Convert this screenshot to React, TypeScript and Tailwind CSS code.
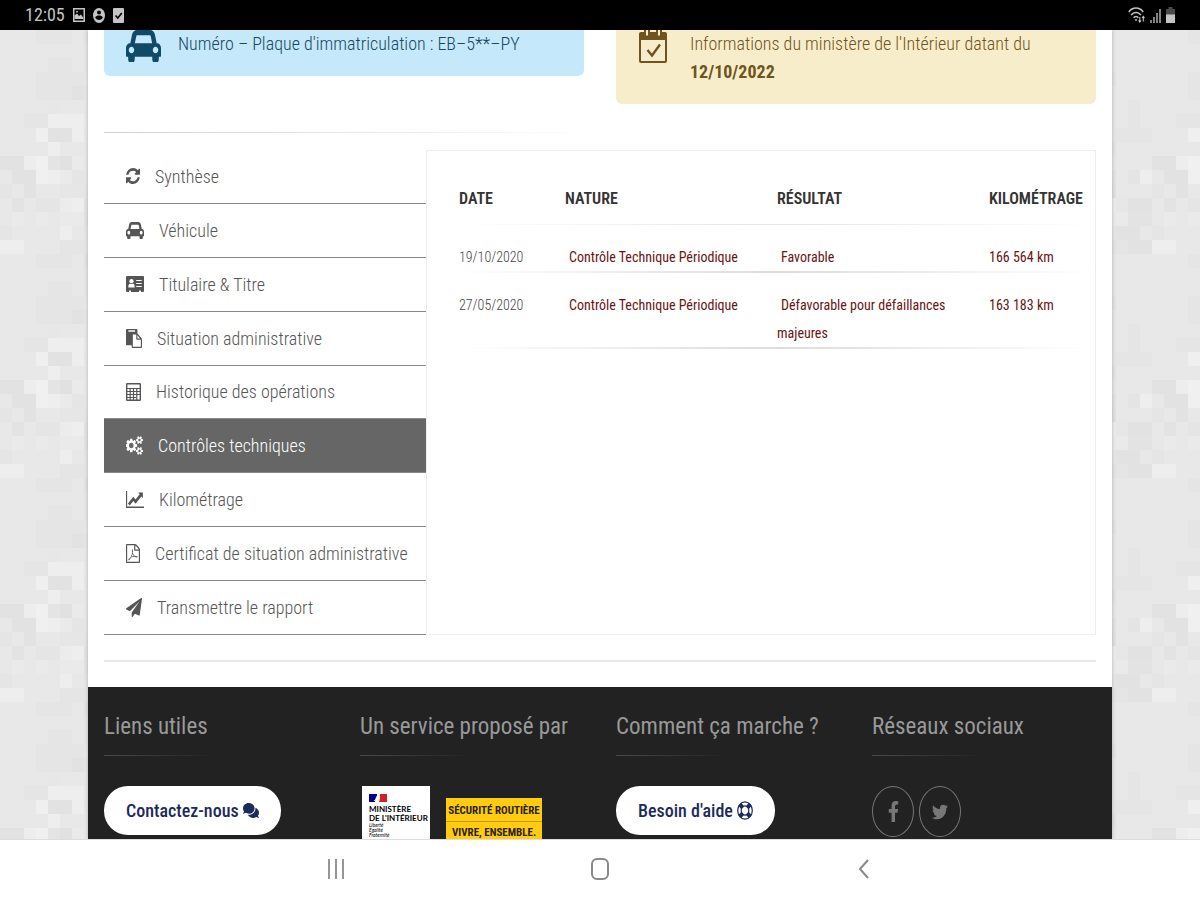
import type { ReactNode } from "react";
import { FaComments, FaFacebookF, FaTwitter } from "react-icons/fa";

const CAR_PATH =
  "M480 1088q0-66-47-113t-113-47-113 47-47 113 47 113 113 47 113-47 47-113zm36-320h1016l-89-357q-2-8-14-17.5t-21-9.5h-768q-9 0-21 9.5t-14 17.5zm1372 320q0-66-47-113t-113-47-113 47-47 113 47 113 113 47 113-47 47-113zm160-96v384q0 14-9 23t-23 9h-96v128q0 80-56 136t-136 56-136-56-56-136v-128h-1024v128q0 80-56 136t-136 56-136-56-56-136v-128h-96q-14 0-23-9t-9-23v-384q0-93 65.5-158.5t158.5-65.5h28l105-419q23-94 104-157.5t179-63.5h768q98 0 179 63.5t104 157.5l105 419h28q93 0 158.5 65.5t65.5 158.5z";
const REFRESH_PATH =
  "M1639 1056q0 5-1 7-64 268-268 434.5t-478 166.5q-146 0-282.5-55t-243.5-157l-129 129q-19 19-45 19t-45-19-19-45v-448q0-26 19-45t45-19h448q26 0 45 19t19 45-19 45l-137 137q71 66 161 102t187 36q134 0 250-65t186-179q11-17 53-117 8-23 30-23h192q13 0 22.5 9.5t9.5 22.5zm25-800v448q0 26-19 45t-45 19h-448q-26 0-45-19t-19-45 19-45l138-138q-148-137-349-137-134 0-250 65t-186 179q-11 17-53 117-8 23-30 23h-199q-13 0-22.5-9.5t-9.5-22.5v-7q65-268 270-434.5t480-166.5q146 0 284 55.5t245 156.5l130-129q19-19 45-19t45 19 19 45z";
const PASTE_PATH =
  "M768 1664h896v-640h-416q-40 0-68-28t-28-68v-416h-384v1152zm256-1440v-64q0-13-9.5-22.5t-22.5-9.5h-704q-13 0-22.5 9.5t-9.5 22.5v64q0 13 9.5 22.5t22.5 9.5h704q13 0 22.5-9.5t9.5-22.5zm256 672h299l-299-299v299zm512 128v672q0 40-28 68t-68 28h-960q-40 0-68-28t-28-68v-160h-544q-40 0-68-28t-28-68v-1344q0-40 28-68t68-28h1088q40 0 68 28t28 68v328q21 13 36 28l408 408q28 28 48 76t20 88z";
const CHART_PATH =
  "M2048 1536v128h-2048v-1536h128v1408h1920zm-128-1248v435q0 21-19.5 29.5t-35.5-7.5l-121-121-633 633q-10 10-23 10t-23-10l-233-233-416 416-192-192 585-585q10-10 23-10t23 10l233 233 464-464-121-121q-16-16-7.5-35.5t29.5-19.5h435q14 0 23 9t9 23z";
const COGS_PATH =
  "M832 896q0-106-75-181t-181-75-181 75-75 181 75 181 181 75 181-75 75-181zm768 512q0-52-38-90t-90-38-90 38-38 90q0 53 37.5 90.5t90.5 37.5 90.5-37.5 37.5-90.5zm0-1024q0-52-38-90t-90-38-90 38-38 90q0 53 37.5 90.5t90.5 37.5 90.5-37.5 37.5-90.5zm-384 421v185q0 10-7 19.5t-16 10.5l-155 24q-11 35-32 76 34 48 90 115 7 11 7 20 0 12-7 19-23 30-82.5 89.5t-78.5 59.5q-11 0-21-7l-115-90q-37 19-77 31-11 108-23 155-7 24-30 24h-186q-11 0-20-7.5t-10-17.5l-23-153q-34-10-75-31l-118 89q-7 7-20 7-11 0-21-8-144-133-144-160 0-9 7-19 10-14 41-53t47-61q-23-44-35-82l-152-24q-10-1-17-9.5t-7-19.5v-185q0-10 7-19.5t16-10.5l155-24q11-35 32-76-34-48-90-115-7-11-7-20 0-12 7-20 22-30 82-89t79-59q11 0 21 7l115 90q34-18 77-32 11-108 23-154 7-24 30-24h186q11 0 20 7.5t10 17.5l23 153q34 10 75 31l118-89q8-7 20-7 11 0 21 8 144 133 144 160 0 8-7 19-12 16-42 54t-45 60q23 48 34 82l152 23q10 2 17 10.5t7 19.5zm640 533v140q0 16-149 31-12 27-30 52 51 113 51 138 0 4-4 7-122 71-124 71-8 0-46-47t-52-68q-20 2-30 2t-30-2q-14 21-52 68t-46 47q-2 0-124-71-4-3-4-7 0-25 51-138-18-25-30-52-149-15-149-31v-140q0-16 149-31 13-29 30-52-51-113-51-138 0-4 4-7 4-2 35-20t59-34 30-16q8 0 46 46.5t52 67.5q20-2 30-2t30 2q51-71 92-112l6-2q4 0 124 70 4 3 4 7 0 25-51 138 17 23 30 52 149 15 149 31zm0-1024v140q0 16-149 31-12 27-30 52 51 113 51 138 0 4-4 7-122 71-124 71-8 0-46-47t-52-68q-20 2-30 2t-30-2q-14 21-52 68t-46 47q-2 0-124-71-4-3-4-7 0-25 51-138-18-25-30-52-149-15-149-31v-140q0-16 149-31 13-29 30-52-51-113-51-138 0-4 4-7 4-2 35-20t59-34 30-16q8 0 46 46.5t52 67.5q20-2 30-2t30 2q51-71 92-112l6-2q4 0 124 70 4 3 4 7 0 25-51 138 17 23 30 52 149 15 149 31z";
const PDF_PATH =
  "M1596 380q28 28 48 76t20 88v1152q0 40-28 68t-68 28h-1344q-40 0-68-28t-28-68v-1600q0-40 28-68t68-28h896q40 0 88 20t76 48zm-444-244v376h376q-10-29-22-41l-313-313q-12-12-41-22zm384 1528v-1024h-416q-40 0-68-28t-28-68v-416h-768v1536h1280zm-514-593q33 26 84 56 59-7 117-7 147 0 177 49 16 22 2 52 0 1-1 2l-2 2v1q-6 38-71 38-48 0-115-20t-130-53q-221 24-392 83-153 262-242 262-15 0-28-7l-24-12q-1-1-6-5-10-10-6-36 9-40 56-91.5t132-96.5q14-9 23 6 2 2 2 4 52-85 107-197 68-136 104-262-24-82-30.5-159.5t6.5-127.5q11-40 42-40h22q23 0 35 15 18 21 9 68-2 6-4 8 1 3 1 8v30q-2 123-14 192 55 164 146 238zm-576 411q52-24 137-158-51 40-87.5 84t-49.5 74zm398-920q-15 42-2 132 1-7 7-44 0-3 7-43 1-4 4-8-1-1-1-2-1-2-1-3-1-22-13-36 0 1-1 2v2zm-124 661q135-54 284-81-2-1-13-9.5t-16-13.5q-76-67-127-176-27 86-83 197-30 56-45 83zm646-16q-24-24-140-24 76 28 124 28 14 0 18-1 0-1-2-3z";
const PLANE_PATH =
  "M1764 11q33 24 27 64l-256 1536q-5 29-32 45-14 8-31 8-11 0-24-5l-453-185-242 295q-18 23-49 23-13 0-22-4-19-7-30.5-23.5t-11.5-36.5v-349l864-1059-1069 925-395-162q-37-14-40-55-2-40 32-59l1664-960q15-9 32-9 20 0 36 11z";

function Glyph({ d, viewBox, className }: { d: string; viewBox: string; className: string }) {
  return (
    <svg viewBox={viewBox} preserveAspectRatio="none" fill="currentColor" className={className} aria-hidden="true">
      <path d={d} />
    </svg>
  );
}

function IdCardIcon() {
  return (
    <svg viewBox="0 0 18 16" preserveAspectRatio="none" className="h-4 w-[18px]" aria-hidden="true">
      <path d="M1 0h16a1 1 0 0 1 1 1v14a1 1 0 0 1-1 1h-2v-1.500h-2V16H5v-1.500H3V16H1a1 1 0 0 1-1-1V1a1 1 0 0 1 1-1z" fill="currentColor" />
      <circle cx="5.500" cy="5.200" r="2.100" fill="#fff" />
      <path d="M2.300 11.500c0-3 1-4 1.800-4 .9.700 1.900.7 2.800 0 .8 0 1.800 1 1.800 4z" fill="#fff" />
      <path d="M10.200 4.500h5.500M10.200 7.500h5.500M10.200 10.500h5.500" stroke="#fff" strokeWidth="1.200" />
    </svg>
  );
}

function CalculatorIcon() {
  return (
    <svg viewBox="0 0 15 18" fill="none" stroke="currentColor" className="h-[18px] w-[15px]" aria-hidden="true">
      <rect x="0.700" y="0.700" width="13.600" height="16.600" rx="0.500" strokeWidth="1.400" />
      <path d="M1 5.500h13M1 8.500h13M1 11.500h13M1 14.500h9M4.200 5.500V17M7.500 5.500V17M10.800 5.500V17" strokeWidth="1.200" />
    </svg>
  );
}

function CalendarIcon() {
  return (
    <svg viewBox="0 0 28 38" fill="none" className="-mt-1 -mb-3 h-[38px] w-7 shrink-0 text-[#6f5420]" aria-hidden="true">
      <path d="M2 6h24a2 2 0 0 1 2 2v27a2 2 0 0 1-2 2H2a2 2 0 0 1-2-2V8a2 2 0 0 1 2-2zM2 14v21h24V14z" fill="currentColor" fillRule="evenodd" />
      <rect x="5" y="1" width="6" height="10" rx="2" fill="currentColor" />
      <rect x="17" y="1" width="6" height="10" rx="2" fill="currentColor" />
      <path d="M8 2.500v7M20 2.500v7" stroke="#f8edcb" strokeWidth="2" />
      <path d="m8.500 24 4.500 5.500 8-11" stroke="currentColor" strokeWidth="2.400" />
    </svg>
  );
}

function LifeRingIcon() {
  return (
    <svg viewBox="0 0 16 19" preserveAspectRatio="none" fill="none" stroke="currentColor" className="h-[19px] w-4" aria-hidden="true">
      <ellipse cx="8" cy="9.500" rx="7.300" ry="8.700" strokeWidth="1.200" />
      <ellipse cx="8" cy="9.500" rx="3.800" ry="4.600" strokeWidth="1.200" />
      <path d="m2.800 3.400 3 3.500M13.200 3.400l-3 3.500M2.800 15.600l3-3.500M13.200 15.600l-3-3.500" strokeWidth="4" />
    </svg>
  );
}

type Tab = { label: string; icon: ReactNode; active?: boolean };

const tabs: Tab[] = [
  { label: "Synthèse", icon: <Glyph d={REFRESH_PATH} viewBox="128 128 1536 1536" className="h-4 w-3.5" /> },
  { label: "Véhicule", icon: <Glyph d={CAR_PATH} viewBox="0 128 2048 1536" className="h-[17px] w-[18px]" /> },
  { label: "Titulaire & Titre", icon: <IdCardIcon /> },
  { label: "Situation administrative", icon: <Glyph d={PASTE_PATH} viewBox="0 0 1792 1792" className="h-[19px] w-4" /> },
  { label: "Historique des opérations", icon: <CalculatorIcon /> },
  { label: "Contrôles techniques", icon: <Glyph d={COGS_PATH} viewBox="0 0 1856 1792" className="h-[19px] w-[17px]" />, active: true },
  { label: "Kilométrage", icon: <Glyph d={CHART_PATH} viewBox="0 128 2048 1536" className="h-[17px] w-[18px]" /> },
  { label: "Certificat de situation administrative", icon: <Glyph d={PDF_PATH} viewBox="128 0 1536 1792" className="h-[19px] w-3.5" /> },
  { label: "Transmettre le rapport", icon: <Glyph d={PLANE_PATH} viewBox="0 0 1792 1792" className="h-[19px] w-4" /> },
];

const controls = [
  { date: "19/10/2020", nature: "Contrôle Technique Périodique", result: "Favorable", km: "166 564 km" },
  { date: "27/05/2020", nature: "Contrôle Technique Périodique", result: "Défavorable pour défaillances majeures", km: "163 183 km" },
];

function noise(seed: number) {
  const n = Math.sin(seed * 12.9898) * 43758.5453;
  return n - Math.floor(n);
}

// Small deterministic mosaic used as the page texture
const tileCells = Array.from({ length: 110 }, (_, i) => {
  const r = noise(i + 1);
  return {
    x: Math.floor(noise(i + 200) * 15) * 12,
    y: Math.floor(noise(i + 400) * 16) * 14,
    width: noise(i + 600) > 0.6 ? 24 : 12,
    height: noise(i + 800) > 0.8 ? 28 : 14,
    fill: r > 0.8 ? "#f1f1f1" : r > 0.5 ? "#ececec" : r < 0.15 ? "#e0e0e0" : "#e5e5e5",
  };
});

function Texture() {
  return (
    <svg className="absolute inset-0 h-full w-full" aria-hidden="true">
      <defs>
        <pattern id="mosaic" width="192" height="224" patternUnits="userSpaceOnUse">
          {tileCells.map((c, i) => (
            <rect key={i} {...c} fillOpacity="0.7" />
          ))}
        </pattern>
      </defs>
      <rect width="100%" height="100%" fill="url(#mosaic)" />
    </svg>
  );
}

function StatusBar() {
  return (
    <header className="flex h-[30px] shrink-0 items-center justify-between bg-black px-[25px] text-[#c4c4c4]">
      <div className="flex items-center gap-2">
        <span className="text-[18px] leading-[30px]">12:05</span>
        <svg viewBox="0 0 12 14" className="h-3.5 w-3" aria-hidden="true">
          <path d="M0 0h12v14H0zM1.500 1.500v11h9v-11z" fill="currentColor" fillRule="evenodd" />
          <path d="M1.500 11V7.500l2.500-2 2 2.500 2-1.500 2.500 3.500v1z" fill="currentColor" />
          <circle cx="4" cy="3.700" r="0.900" fill="currentColor" />
        </svg>
        <svg viewBox="0 0 12 15" className="h-[15px] w-3" aria-hidden="true">
          <ellipse cx="6" cy="7.500" rx="6" ry="7.500" fill="currentColor" />
          <circle cx="6" cy="4.500" r="2" fill="#000" />
          <path d="M2.200 9.300c1.200-2.400 6.400-2.400 7.600 0-.8 3.500-6.800 3.500-7.600 0z" fill="#000" />
        </svg>
        <svg viewBox="0 0 11 15" className="h-[15px] w-[11px]" aria-hidden="true">
          <rect width="11" height="15" rx="1" fill="currentColor" />
          <path d="m2.500 7.500 2.300 2.500 4-5" stroke="#000" strokeWidth="1.600" fill="none" />
        </svg>
      </div>
      <div className="flex items-center gap-[5px]">
        <svg viewBox="0 0 17 16" fill="none" stroke="currentColor" className="h-4 w-[17px]" aria-hidden="true">
          <path d="M.8 5C4.500-.2 11.500-.2 15.200 5M3.200 8c2.500-3.400 7.100-3.400 9.600 0M5.600 10.800c1.200-1.700 3.600-1.700 4.800 0" strokeWidth="1.500" />
          <path d="M7 12.500 8 14l1-1.500z" fill="currentColor" strokeWidth="0.500" />
          <path d="M11.800 10v5M10.600 13.500l1.200 1.500 1.200-1.500M15.300 14.500V9.500M14.100 11l1.200-1.500 1.200 1.500" strokeWidth="1.100" />
        </svg>
        <svg viewBox="0 0 11 15" stroke="currentColor" className="h-[15px] w-[11px]" aria-hidden="true">
          <path d="M1 15v-3M4 15V9M7 15V5M10 15V1" strokeWidth="1.300" />
        </svg>
        <svg viewBox="0 0 9 16" className="h-4 w-[9px]" aria-hidden="true">
          <path d="M2.500 0h4v2H9v14H0V2h2.500z" fill="#4a4a4a" />
          <path d="M0 7.500h9V16H0z" fill="currentColor" />
        </svg>
      </div>
    </header>
  );
}

function FooterColumn({ title, children }: { title: string; children: ReactNode }) {
  return (
    <section className="min-w-0">
      <h2 className="text-[23px] leading-7 whitespace-nowrap text-[#999]">{title}</h2>
      <div className="mt-3.5 mb-[30px] h-px bg-linear-to-r from-[#4a4a4a] to-transparent to-50%" />
      {children}
    </section>
  );
}

export default function App() {
  return (
    <div className="flex h-screen flex-col overflow-hidden bg-[#e8e8e8] font-['Roboto_Condensed',Roboto,sans-serif] text-[#555]">
      <StatusBar />

      <main className="relative flex-1 overflow-hidden">
        <Texture />
        <div className="relative mx-auto flex h-full max-w-[1024px] flex-col bg-white shadow-[0_0_4px_rgba(0,0,0,0.25)]">
          <div className="px-4">
            {/* Summary cards */}
            <div className="grid grid-cols-2 items-start gap-8 text-[18px] leading-7">
              <div className="-mt-2 flex items-start gap-[17px] rounded-md bg-[#c5e8fa] pt-2 pb-[18px] pl-[22px] font-light text-[#17485f]">
                <Glyph d={CAR_PATH} viewBox="0 128 2048 1536" className="-mb-1 h-8 w-[35px] shrink-0 text-[#0f4a66]" />
                <p>Numéro – Plaque d'immatriculation : EB–5**–PY</p>
              </div>
              <div className="-mt-2 flex items-start gap-[23px] rounded-md bg-[#f8edcb] pt-2 pb-[18px] pl-[23px] font-light text-[#6f5420]">
                <CalendarIcon />
                <p>
                  Informations du ministère de l'Intérieur datant du
                  <br />
                  <strong className="font-bold">12/10/2022</strong>
                </p>
              </div>
            </div>

            <div className="mt-7 mb-[17px] h-px bg-linear-to-r from-[#d0d0d0] to-transparent to-50%" />

            <div className="flex">
              {/* Report sections */}
              <nav className="grid min-h-[485px] w-[322px] shrink-0 auto-rows-fr">
                {tabs.map((tab) => (
                  <a
                    key={tab.label}
                    href="#"
                    className={`flex items-center gap-[15px] border-b border-[#888] pl-[22px] text-[18px] font-light whitespace-nowrap ${
                      tab.active ? "bg-[#666] text-white" : "text-[#555]"
                    }`}
                  >
                    {tab.icon}
                    <span>{tab.label}</span>
                  </a>
                ))}
              </nav>

              <div className="min-w-0 flex-1 border border-[#eee] pl-8">
                <table className="w-full table-fixed text-left align-top text-[14px] leading-7">
                  <thead>
                    <tr className="bg-[linear-gradient(90deg,transparent,#e4e4e4_50%,transparent)] bg-[length:100%_1px] bg-bottom bg-no-repeat text-[16px] text-[#333]">
                      <th className="w-1/6 pt-[34px] pb-3 font-semibold">DATE</th>
                      <th className="w-1/3 pt-[34px] pb-3 font-semibold">NATURE</th>
                      <th className="w-1/3 pt-[34px] pb-3 font-semibold">RÉSULTAT</th>
                      <th className="w-1/6 pt-[34px] pb-3 font-semibold">KILOMÉTRAGE</th>
                    </tr>
                  </thead>
                  <tbody>
                    {controls.map((row) => (
                      <tr
                        key={row.date}
                        className="bg-[linear-gradient(90deg,transparent,#dcdcdc_50%,transparent)] bg-[length:100%_2px] bg-bottom bg-no-repeat align-top text-[#691414]"
                      >
                        <td className="pt-[18px] pb-0.5 font-light text-[#444]">{row.date}</td>
                        <td className="pt-[18px] pb-0.5 indent-1">{row.nature}</td>
                        <td className="pt-[18px] pr-4 pb-0.5 indent-1">{row.result}</td>
                        <td className="pt-[18px] pb-0.5">{row.km}</td>
                      </tr>
                    ))}
                  </tbody>
                </table>
              </div>
            </div>

            <div className="my-[25px] h-0.5 bg-[#e8e8e8]" />
          </div>

          <footer className="grid flex-1 grid-cols-4 gap-8 bg-[#222] px-4 pt-[26px]">
            <FooterColumn title="Liens utiles">
              <button className="flex h-[49px] items-center gap-1 rounded-3xl bg-white px-[22px] text-[18px] font-medium text-[#1c2b5a]">
                Contactez-nous
                <FaComments preserveAspectRatio="none" className="h-[17px] w-4" />
              </button>
            </FooterColumn>
            <FooterColumn title="Un service proposé par">
              <div className="flex items-start gap-4 pl-0.5">
                <div className="w-[68px] bg-white pt-2 pb-4 pl-[7px] font-['Lato',sans-serif] text-black">
                  <svg viewBox="0 0 18 8" className="h-2 w-[18px]" aria-hidden="true">
                    <path d="M0 0h8v8H0z" fill="#000091" />
                    <path d="M11 0h7v8h-8z" fill="#d0202e" />
                    <path d="M6 8c0-3 1-6 3-7 1.500 0 2 1.500 2 3l-1 4z" fill="#fff" />
                    <path d="m5 7 2-2" stroke="#fff" strokeWidth="0.800" />
                  </svg>
                  <p className="mt-[3px] text-[8px] leading-[9px] font-bold whitespace-nowrap">
                    MINISTÈRE
                    <br />
                    DE L'INTÉRIEUR
                  </p>
                  <p className="text-[5px] leading-[5px] italic">
                    Liberté
                    <br />
                    Égalité
                    <br />
                    Fraternité
                  </p>
                </div>
                <div className="mt-3 w-24 bg-[#fc1] pt-0.5 text-center text-[11px] leading-[21px] font-bold whitespace-nowrap text-[#2c2208]">
                  <p className="border-b border-[#c99a10]">SÉCURITÉ ROUTIÈRE</p>
                  <p>VIVRE, ENSEMBLE.</p>
                </div>
              </div>
            </FooterColumn>
            <FooterColumn title="Comment ça marche ?">
              <button className="flex h-[49px] items-center gap-1 rounded-3xl bg-white px-[22px] text-[18px] font-medium text-[#1c2b5a]">
                Besoin d'aide
                <LifeRingIcon />
              </button>
            </FooterColumn>
            <FooterColumn title="Réseaux sociaux">
              <div className="flex gap-[5px] text-[#777]">
                <a href="#" aria-label="Facebook" className="flex h-[51px] w-[42px] items-center justify-center rounded-[50%] border border-[#777]">
                  <FaFacebookF preserveAspectRatio="none" className="h-[21px] w-[11px]" />
                </a>
                <a href="#" aria-label="Twitter" className="flex h-[51px] w-[42px] items-center justify-center rounded-[50%] border border-[#777]">
                  <FaTwitter preserveAspectRatio="none" className="h-[18px] w-4" />
                </a>
              </div>
            </FooterColumn>
          </footer>
        </div>
      </main>

      <nav className="h-[61px] shrink-0 border-t border-[#ddd] bg-white pb-0.5 text-[#8a8a8a]">
        <div className="mx-auto grid h-full w-[66%] grid-cols-3 place-items-center">
          <button aria-label="Recents">
            <svg viewBox="0 0 16 20" stroke="currentColor" className="h-5 w-4" aria-hidden="true">
              <path d="M1 0v20M8 0v20M15 0v20" strokeWidth="1.800" />
            </svg>
          </button>
          <button aria-label="Home">
            <svg viewBox="0 0 18 22" fill="none" stroke="currentColor" className="h-[22px] w-[18px]" aria-hidden="true">
              <rect x="1" y="1" width="16" height="20" rx="5" strokeWidth="2" />
            </svg>
          </button>
          <button aria-label="Back">
            <svg viewBox="0 0 10 20" fill="none" stroke="currentColor" className="h-5 w-2.5" aria-hidden="true">
              <path d="m9 1-8 9 8 9" strokeWidth="2" />
            </svg>
          </button>
        </div>
      </nav>
    </div>
  );
}
